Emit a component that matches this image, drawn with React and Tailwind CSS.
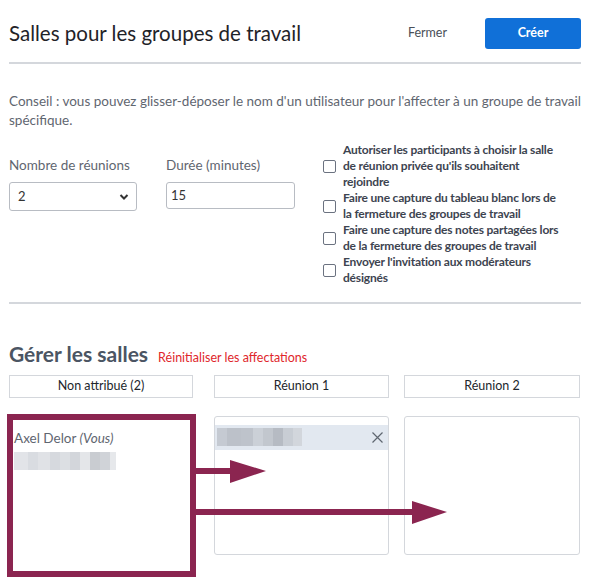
import React from "react";

const F = { fontFamily: '"Lato", "Liberation Sans", sans-serif' };

function Pix({ cells, h }) {
  return (
    <div className={`flex ${h}`}>
      {cells.map((c, i) => (
        <div key={i} className={c} />
      ))}
    </div>
  );
}

function Check({ children }) {
  return (
    <label className="flex items-center gap-[7px]">
      <span className="w-[13px] h-[13px] shrink-0 rounded-[2px] border border-[#6b7280] bg-white" />
      <span className="text-[12px] leading-[16px] tracking-[-0.2px] font-bold text-[#3d4450]">{children}</span>
    </label>
  );
}

export default function App() {
  return (
    <div style={F} className="w-[603px] h-[587px] bg-white pl-[9px] pr-[22px] pt-[18px] overflow-hidden">
      {/* Header */}
      <div className="flex items-center h-[31px]">
        <h1 className="text-[20.5px] leading-[31px] text-[#1f2328] font-normal flex-1">Salles pour les groupes de travail</h1>
        <button className="text-[12.5px] text-[#4a5058] mr-[38px]">Fermer</button>
        <button className="w-[96px] h-[31px] rounded-[3px] bg-[#1070d8] text-white text-[12.5px] font-bold">Créer</button>
      </div>
      <div className="mt-[13px] h-[2px] bg-[#d4d7dc]" />

      {/* Conseil */}
      <p className="mt-[28px] text-[13.5px] leading-[19px] text-[#5f6670] whitespace-nowrap">
        Conseil : vous pouvez glisser-déposer le nom d'un utilisateur pour l'affecter à un groupe de travail
        <br />
        spécifique.
      </p>

      {/* Options */}
      <div className="mt-[12px] flex">
        <div className="pt-[14px]">
          <div className="flex gap-[29px]">
            <div>
              <div className="text-[13.5px] leading-[19px] text-[#5f6670]">Nombre de réunions</div>
              <div className="mt-[7px] w-[128px] h-[29px] rounded-[3px] border border-[#b8bcc3] flex items-center justify-between pl-[8px] pr-[7px] text-[13px] text-[#333]">
                <span>2</span>
                <svg width="10" height="8" viewBox="0 0 10 8">
                  <path d="M1.5 2 L5 5.5 L8.5 2" fill="none" stroke="#333" strokeWidth="2" />
                </svg>
              </div>
            </div>
            <div>
              <div className="text-[13.5px] leading-[19px] text-[#5f6670]">Durée (minutes)</div>
              <div className="mt-[7px] w-[129px] h-[27px] rounded-[3px] border border-[#b8bcc3] flex items-center pl-[4px] text-[13px] text-[#333]">
                15
              </div>
            </div>
          </div>
        </div>
        <div className="ml-[28px] w-[240px] flex flex-col">
          <Check>Autoriser les participants à choisir la salle de réunion privée qu'ils souhaitent rejoindre</Check>
          <Check>Faire une capture du tableau blanc lors de la fermeture des groupes de travail</Check>
          <Check>Faire une capture des notes partagées lors de la fermeture des groupes de travail</Check>
          <Check>Envoyer l'invitation aux modérateurs désignés</Check>
        </div>
      </div>
      <div className="mt-[16px] h-[2px] bg-[#d4d7dc]" />

      {/* Gérer */}
      <div className="mt-[38px] flex items-baseline gap-[10px]">
        <h2 className="text-[21px] leading-[24px] font-bold text-[#4b5563]">Gérer les salles</h2>
        <button className="text-[12.5px] text-[#e0262b]">Réinitialiser les affectations</button>
      </div>

      <div className="relative mt-[7px]">
        <div className="flex">
          <div className="w-[184px]">
            <div className="h-[23px] border border-[#d4d7dc] flex items-center justify-center text-[12.5px] text-[#22262c]">Non attribué (2)</div>
            <div className="mt-[18px] h-[139px] pl-[5px] pt-[13px]">
              <div className="text-[13.5px] leading-[18px] text-[#5f6670]">
                Axel Delor <span className="italic">(Vous)</span>
              </div>
              <div className="mt-[5px]">
                <Pix
                  h="h-[18px]"
                  cells={[
                    "w-[14px] bg-[#e2e4e8]",
                    "w-[10px] bg-[#d9dce1]",
                    "w-[12px] bg-[#e0e2e6]",
                    "w-[10px] bg-[#d6d9de]",
                    "w-[10px] bg-[#dcdfe3]",
                    "w-[10px] bg-[#d3d6db]",
                    "w-[10px] bg-[#e4e6e9]",
                    "w-[10px] bg-[#c9ccd1]",
                    "w-[10px] bg-[#d0d3d8]",
                    "w-[6px] bg-[#e6e8eb]",
                  ]}
                />
              </div>
            </div>
          </div>
          <div className="w-[175px] ml-[21px]">
            <div className="h-[23px] border border-[#d4d7dc] flex items-center justify-center text-[12.5px] text-[#22262c]">Réunion 1</div>
            <div className="mt-[18px] h-[139px] rounded-[3px] border border-[#d4d7dc] pt-[8px]">
              <div className="h-[25px] bg-[#e2e8f0] flex items-center justify-between pl-[2px] pr-[5px]">
                <Pix
                  h="h-[18px]"
                  cells={[
                    "w-[10px] bg-[#c5cad2]",
                    "w-[14px] bg-[#bcc1c9]",
                    "w-[12px] bg-[#bec3cb]",
                    "w-[10px] bg-[#cbd0d7]",
                    "w-[10px] bg-[#c2c7ce]",
                    "w-[10px] bg-[#b6bbc3]",
                    "w-[10px] bg-[#c8cdd4]",
                    "w-[9px] bg-[#d2d6dc]",
                  ]}
                />
                <svg width="11" height="11" viewBox="0 0 11 11">
                  <path d="M0.5 0.5 L10.5 10.5 M10.5 0.5 L0.5 10.5" stroke="#5f6670" strokeWidth="1.2" />
                </svg>
              </div>
            </div>
          </div>
          <div className="w-[176px] ml-[15px]">
            <div className="h-[23px] border border-[#d4d7dc] flex items-center justify-center text-[12.5px] text-[#22262c]">Réunion 2</div>
            <div className="mt-[18px] h-[139px] rounded-[3px] border border-[#d4d7dc]" />
          </div>
        </div>

        {/* annotations */}
        <div className="absolute left-[-2px] top-[39px] w-[189px] h-[163px] border-[6px] border-[#8b2550] pointer-events-none" />
        <svg className="absolute left-0 top-0 pointer-events-none" width="572" height="210" viewBox="0 0 572 210">
          <rect x="187" y="93" width="36" height="6" fill="#8b2550" />
          <polygon points="221,85 257,96 221,108" fill="#8b2550" />
          <rect x="187" y="134" width="218" height="6" fill="#8b2550" />
          <polygon points="403,126 438,137 403,149" fill="#8b2550" />
        </svg>
      </div>
    </div>
  );
}
